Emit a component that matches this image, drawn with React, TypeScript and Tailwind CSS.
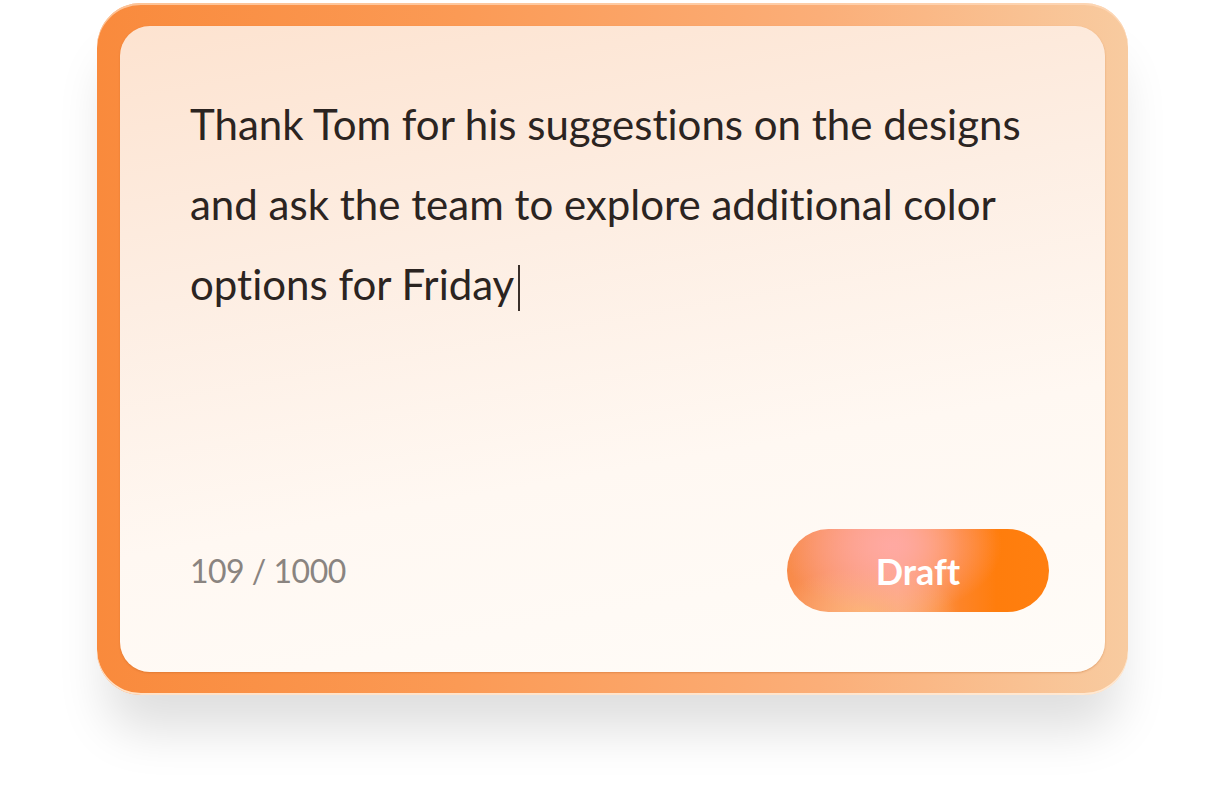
import React from "react";

export default function App() {
  return (
    <div className="w-[1225px] h-[793px] bg-white overflow-hidden [font-variant-ligatures:none]" style={{ fontFamily: "Lato, 'Noto Sans', sans-serif" }}>
      <div className="pl-[97px] pt-[3px]">
        <div className="w-[1031px] h-[692px] rounded-[44px] p-[23px] bg-[linear-gradient(90deg,#f98a3c_0%,#fb9a55_35%,#fbae78_70%,#f8cba0_100%)] shadow-[0_45px_50px_-10px_rgba(0,0,0,0.13),inset_0_2px_0_rgba(255,220,190,0.7),inset_0_-2px_0_rgba(255,235,215,0.9)]">
          <div className="w-full h-full rounded-[30px] bg-[linear-gradient(170deg,#fde3d0_0%,#fdeee3_35%,#fff8f2_65%,#fffcf8_100%)] shadow-[0_1px_2px_rgba(180,90,30,0.35)] flex flex-col justify-between pl-[70px] pr-[56px] pt-[58px] pb-[60px]">
            <p className="text-[42px] leading-[80px] text-[#2b2421] max-w-[860px]">
              Thank Tom for his suggestions on the designs and ask the team to explore additional color options for Friday
              <span className="inline-block w-[2px] h-[46px] bg-[#3a302b] align-[-11px] ml-[4px]"></span>
            </p>
            <div className="flex items-center justify-between">
              <span className="text-[32px] text-[#8a8480] tracking-[-0.5px]">109 / 1000</span>
              <button className="w-[262px] h-[83px] rounded-full text-white text-[36px] font-bold bg-[radial-gradient(ellipse_110px_70px_at_40%_20%,#ffa9a2_0%,rgba(255,169,162,0.6)_40%,rgba(255,169,162,0)_100%),radial-gradient(ellipse_90px_45px_at_30%_100%,#fcb478_0%,rgba(252,180,120,0)_100%),linear-gradient(90deg,#f88a48_0%,#fa9872_25%,#fca48a_42%,#fc9550_56%,#fd8428_66%,#ff7d0c_80%,#ff7f10_100%)]">
                Draft
              </button>
            </div>
          </div>
        </div>
      </div>
    </div>
  );
}
